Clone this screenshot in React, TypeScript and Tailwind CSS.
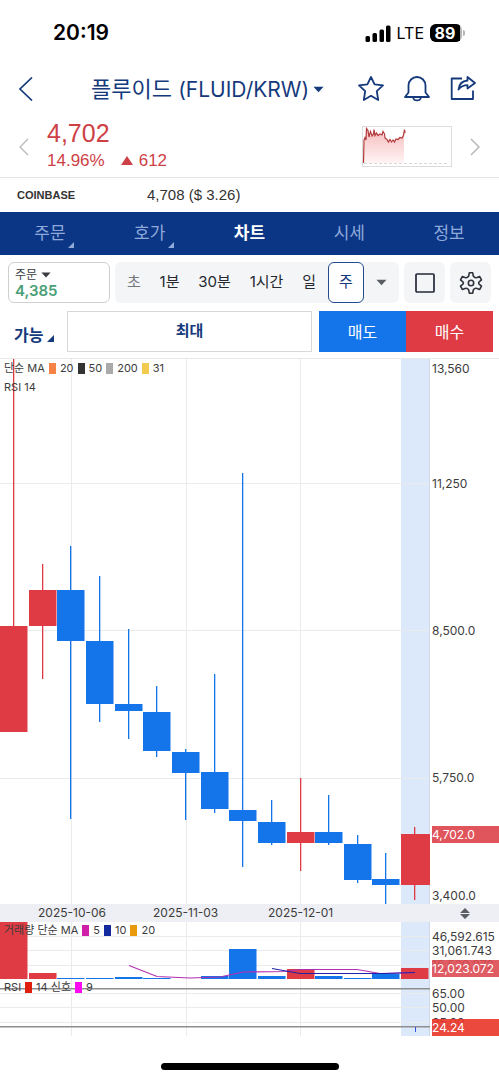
const tabs = [
  { name: "주문", more: true },
  { name: "호가", more: true },
  { name: "차트", active: true },
  { name: "시세" },
  { name: "정보" },
]

const UP = "#de3b44"
const DOWN = "#1474ea"

// top / bottom of the body, high / low of the wick, top of the volume bar
const candles = [
  { top: 267, bottom: 373, high: 0, low: 373, vol: 0, up: true },
  { top: 231, bottom: 267, high: 205, low: 320, vol: 51, up: true },
  { top: 231, bottom: 282, high: 187, low: 460, vol: 56 },
  { top: 282, bottom: 345, high: 217, low: 363, vol: 56 },
  { top: 345, bottom: 352, high: 270, low: 380, vol: 55 },
  { top: 353, bottom: 392, high: 327, low: 398, vol: 56 },
  { top: 393, bottom: 414, high: 390, low: 461, vol: 57 },
  { top: 413, bottom: 450, high: 315, low: 454, vol: 54 },
  { top: 451, bottom: 462, high: 114, low: 508, vol: 27 },
  { top: 463, bottom: 484, high: 441, low: 486, vol: 54 },
  { top: 473, bottom: 484, high: 419, low: 512, vol: 47, up: true },
  { top: 473, bottom: 484, high: 436, low: 486, vol: 54 },
  { top: 485, bottom: 521, high: 476, low: 524, vol: 56 },
  { top: 520, bottom: 526, high: 494, low: 545, vol: 52 },
  { top: 475, bottom: 526, high: 468, low: 541, vol: 46, up: true },
]

const left = (i: number) => Math.round(i * 28.65)
const gridX = [71, 186, 300]

const priceLabels = [
  { text: "13,560", y: 10 },
  { text: "11,250", y: 125 },
  { text: "8,500.0", y: 272 },
  { text: "5,750.0", y: 419 },
  { text: "3,400.0", y: 537 },
]

const subLabels = [
  { text: "46,592.615", y: 15 },
  { text: "31,061.743", y: 29 },
  { text: "15,530.872", y: 43 },
  { text: "65.00", y: 72 },
  { text: "50.00", y: 86 },
  { text: "35.00", y: 101 },
]

const Legend = ({ color, text }: { color: string; text: string }) => (
  <span className="flex items-center gap-1">
    <i className="h-[11px] w-[7px]" style={{ background: color }} />
    {text}
  </span>
)

const AxisLabel = ({ text, y }: { text: string; y: number }) => (
  <span className="absolute left-0.5 -translate-y-1/2 leading-4" style={{ top: y }}>
    {text}
  </span>
)

const Caret = ({ className }: { className: string }) => (
  <svg viewBox="0 0 12 7" className={className} fill="currentColor">
    <path d="M0.5 0.5h11L6 6.5z" />
  </svg>
)

const Corner = ({ className }: { className: string }) => (
  <svg viewBox="0 0 7 7" className={className} fill="currentColor">
    <path d="M7 0v7H0z" />
  </svg>
)

const StatusBar = () => (
  <div className="flex h-[66px] items-center justify-between pr-[34px] pl-[53px] text-black">
    <span className="text-[21px] font-semibold">20:19</span>
    <div className="flex items-center gap-1.5">
      <svg viewBox="0 0 26 17" className="h-[17px] w-[26px]">
        <rect x="0.5" y="11" width="4.5" height="6" rx="1.5" />
        <rect x="7.5" y="8" width="4.5" height="9" rx="1.5" />
        <rect x="14.5" y="4.500" width="4.5" height="12.500" rx="1.5" />
        <rect x="21" y="0.500" width="4.5" height="16.500" rx="1.5" />
      </svg>
      <span className="text-base">LTE</span>
      <div className="flex items-center gap-px">
        <div className="flex h-[18px] w-8 items-center overflow-hidden rounded-[6px] bg-[#b5b5b5]">
          <span className="flex h-full w-[30px] items-center justify-center bg-black text-base font-bold text-white">89</span>
        </div>
        <i className="h-1.5 w-0.5 rounded-r bg-[#b5b5b5]" />
      </div>
    </div>
  </div>
)

const Header = () => (
  <header className="flex h-[46px] items-center justify-between pr-[22px] pl-[18px] text-[#153a7c]">
    <button aria-label="뒤로" className="w-[73px]">
      <svg viewBox="0 0 16 24" className="h-6 w-4" fill="none" stroke="currentColor" strokeWidth="1.7">
        <path d="M14 0.500L2 12l12 11.500" />
      </svg>
    </button>
    <button className="flex flex-1 items-center gap-1">
      <h1 className="text-[22px] whitespace-nowrap">
        플루이드 <span className="text-[21px]">(FLUID/KRW)</span>
      </h1>
      <Caret className="h-[7px] w-[11px]" />
    </button>
    <div className="flex items-center gap-[18px]">
      <button aria-label="관심">
        <svg viewBox="0 0 28 28" className="size-7" fill="none" stroke="currentColor" strokeWidth="1.8" strokeLinejoin="round">
          <path d="M14 2l3.600 7.400 8.400 1-6.200 5.700 1.400 8.900L14 20.800l-7.200 4.200 1.400-8.900L2 10.400l8.400-1z" />
        </svg>
      </button>
      <button aria-label="알림">
        <svg viewBox="0 0 28 28" className="size-7" fill="none" stroke="currentColor" strokeWidth="1.8" strokeLinejoin="round">
          <path d="M5.500 17.500V10.500a8.500 8.500 0 0 1 17 0v7l3.500 4.500H2z" />
          <path d="M10 22c0.600 4.600 7.400 4.600 8 0" />
        </svg>
      </button>
      <button aria-label="공유">
        <svg viewBox="0 0 28 28" className="size-7" fill="none" stroke="currentColor" strokeWidth="1.800" strokeLinejoin="round">
          <path d="M13 3.500H2.700v20.500H24V15.500" />
          <path d="M18.500 2l7.500 6-7.500 5.500v-3.300c-4 0-6.500 1-9 4.300 0.500-5 3.500-8.500 9-9z" />
        </svg>
      </button>
    </div>
  </header>
)

const Sparkline = () => (
  <svg viewBox="0 0 90 41" className="h-[41px] w-[90px]" fill="none">
    <defs>
      <linearGradient id="fade" x1="0" y1="0" x2="0" y2="1">
        <stop offset="0" stopColor="#f6bcbd" />
        <stop offset="1" stopColor="#fff4f4" />
      </linearGradient>
    </defs>
    <path d="M1.500 37L2.500 13 4 11 5 3 7 7 9 10 12 6 17 9 21 8 24 13 29 16 34 14 37 12 40 11 42 5V37z" fill="url(#fade)" />
    <rect x="0.5" y="0.5" width="89" height="40" stroke="#dcdcdc" />
    <path d="M2 37.500h85" stroke="#d8d8d8" strokeDasharray="3 2" />
    <path
      d="M1.500 37L2 14 3 11.500 4 14 4.500 2.500 6 4.500 7 11 8.500 5.500 10 10 11.500 8 12 3.500 13 9.500 14.500 7 16 9.500 18 8 20 9 21 5.500 22.500 8 23 12 25 13.500 26.500 16 28 13.500 29.500 16 31 14 32.500 16 34 13 36 13.500 38 11.500 40 12 41.500 9.500 42.500 3.500 43 7"
      stroke="#b4393b"
      strokeWidth="1.200"
    />
  </svg>
)

const PriceRow = () => (
  <div className="flex h-[66px] items-center border-b border-[#e4e4e4] px-[19px] pt-1 font-['Liberation_Sans','Noto_Sans_CJK_KR',sans-serif] text-[#cd4146]">
    <button aria-label="이전 종목" className="w-7 text-[#b8b8b8]">
      <svg viewBox="0 0 10 18" className="h-[18px] w-2.5" fill="none" stroke="currentColor" strokeWidth="1.300">
        <path d="M9 1L1 9l8 8" />
      </svg>
    </button>
    <div className="flex-1">
      <p className="text-[25px] leading-7">4,702</p>
      <p className="flex items-center text-[17px] leading-7">
        14.96%
        <svg viewBox="0 0 12 9" className="mr-1.5 ml-4 h-[9px] w-3" fill="currentColor">
          <path d="M6 0l6 9H0z" />
        </svg>
        612
      </p>
    </div>
    <Sparkline />
    <button aria-label="다음 종목" className="flex w-7 justify-end text-[#b8b8b8]">
      <svg viewBox="0 0 10 18" className="h-[18px] w-2.5" fill="none" stroke="currentColor" strokeWidth="1.500">
        <path d="M1 1l8 8-8 8" />
      </svg>
    </button>
  </div>
)

const Toolbar = () => (
  <div className="flex gap-[5px] px-2 pt-[7px]">
    <button className="flex h-[41px] w-[102px] flex-col justify-center rounded-md border border-[#cfcfcf] pl-1.5 text-left">
      <span className="flex items-center gap-1 text-xs leading-4 text-[#3a3d42]">
        주문 <Caret className="h-1.5 w-2.5" />
      </span>
      <span className="text-[15px] leading-4 font-semibold text-[#4a9e76]">4,385</span>
    </button>
    <div className="flex h-[41px] flex-1 items-stretch justify-between rounded-md bg-[#f3f5f7] px-3 text-[15px] text-[#25282e]">
      <button className="text-[#74777c]">초</button>
      <button>1분</button>
      <button>30분</button>
      <button>1시간</button>
      <div className="flex gap-3">
        <button>일</button>
        <button className="w-9 rounded-md border border-[#234a8c] bg-white text-[#153a7c]">주</button>
        <button aria-label="주기 더보기" className="text-[#5b5e64]">
          <Caret className="h-[7px] w-[11px]" />
        </button>
      </div>
    </div>
    <button aria-label="전체 화면" className="flex size-[41px] items-center justify-center rounded-md bg-[#f3f5f7]">
      <svg viewBox="0 0 20 20" className="size-5" fill="none" stroke="#25283a" strokeWidth="1.700">
        <rect x="1" y="1" width="18" height="18" rx="1" />
      </svg>
    </button>
    <button aria-label="설정" className="flex size-[41px] items-center justify-center rounded-md bg-[#f3f5f7]">
      <svg viewBox="0 0 24 24" className="size-6" fill="none" stroke="#30333c" strokeWidth="1.600" strokeLinejoin="round">
        <path d="M10.300 1.800h3.400l0.600 3.200q1.400 2.300 3.700 1.500l2.600-1 1.900 3.300-2.400 2q-1 1.200 0 2.400l2.400 2-1.900 3.300-2.600-1q-2.300-0.800-3.700 1.500l-0.600 3.200h-3.400l-0.600-3.200q-1.400-2.300-3.700-1.500l-2.600 1-1.900-3.300 2.400-2q1-1.200 0-2.400l-2.400-2 1.900-3.300 2.600 1q2.300 0.800 3.700-1.500z" />
        <circle cx="12" cy="12" r="2.700" />
      </svg>
    </button>
  </div>
)

const OrderRow = () => (
  <div className="flex h-14 items-start border-b border-[#e8e8e8] pt-2 pr-1.5 pl-3.5">
    <button className="flex h-[41px] w-[53px] items-center gap-1 pt-1.5 text-base font-bold whitespace-nowrap text-[#153a7c]">
      가능 <Corner className="mt-2 size-[7px]" />
    </button>
    <button className="h-[41px] flex-1 border border-[#d8d8d8] text-[15px] font-bold text-[#153a7c]">최대</button>
    <div className="ml-[7px] flex h-[41px] w-[174px] text-base text-white">
      <button className="flex-1 bg-[#1474ea]">매도</button>
      <button className="flex-1 bg-[#de3b44]">매수</button>
    </div>
  </div>
)

const Chart = () => (
  <section className="text-xs text-[#3c3c3c]">
    <div className="flex">
      <div className="relative min-w-0 flex-1">
        <svg viewBox="0 0 430 545" preserveAspectRatio="none" className="h-[545px] w-full">
          <rect x="401" width="28" height="545" fill="#dbe9fa" />
          {gridX.map((x) => (
            <path key={x} d={`M${x + 0.5} 0v545`} stroke="#ebebeb" />
          ))}
          <path d="M0 124.500h430M0 271.500h430M0 419.500h430" stroke="#ebebeb" />
          <path d="M429.500 0v545" stroke="#cfd8e4" />
          {candles.map((c, i) => (
            <g key={i} fill={c.up ? UP : DOWN}>
              <rect x={left(i) + 13} y={c.high} width="1.300" height={c.low - c.high} />
              <rect x={left(i)} y={c.top} width={i === 14 ? 29 : 27.500} height={c.bottom - c.top} />
            </g>
          ))}
        </svg>
        <div className="absolute top-0 left-1 text-[11px] leading-[19px]">
          <p className="flex gap-1">
            단순 MA
            <Legend color="#f58345" text="20" />
            <Legend color="#333333" text="50" />
            <Legend color="#aaaaaa" text="200" />
            <Legend color="#f2cb4e" text="31" />
          </p>
          <p>RSI 14</p>
        </div>
      </div>
      <div className="relative w-[69px]">
        {priceLabels.map((l) => (
          <AxisLabel key={l.text} {...l} />
        ))}
        <span className="absolute top-[467px] right-0 left-0.5 bg-[#e0555c] leading-[17px] text-white">4,702.0</span>
      </div>
    </div>

    <div className="flex h-[18px] items-center bg-[#eeeff4]">
      <div className="grid h-full min-w-0 flex-1 grid-cols-[38px_115px_115px_1fr_28px] items-center">
        <span />
        <span>2025-10-06</span>
        <span>2025-11-03</span>
        <span>2025-12-01</span>
      </div>
      <div className="flex w-[69px] justify-center">
        <svg viewBox="0 0 10 11" className="h-[11px] w-2.5" fill="#5b5e64">
          <path d="M5 0l5 5H0zM0 6h10l-5 5z" />
        </svg>
      </div>
    </div>

    <div className="flex">
      <div className="relative min-w-0 flex-1">
        <svg viewBox="0 0 430 114" preserveAspectRatio="none" className="h-[114px] w-full" fill="none">
          <rect x="401" width="28" height="114" fill="#dbe9fa" />
          {gridX.map((x) => (
            <path key={x} d={`M${x + 0.5} 0v114`} stroke="#ebebeb" />
          ))}
          <path d="M0 14.500h430M0 28.500h430M0 43.500h430M0 71.500h430M0 85.500h430M0 100.500h430" stroke="#ebebeb" />
          <path d="M429.500 0v114" stroke="#cfd8e4" />
          {candles.map((c, i) => (
            <rect key={i} x={left(i)} y={c.vol} width="27.500" height={57 - c.vol} fill={c.up ? UP : DOWN} />
          ))}
          <path d="M129 43.500L157 54.500 190 56 220 55 243 50 286 49.500 300 47.500H357L380 51.500 415 50.500" stroke="#b02fb0" strokeWidth="1.200" />
          <path d="M272 46.500L300 51.500H386L415 50.500" stroke="#2222a8" strokeWidth="1.200" />
          <path d="M0 66.700h430M0 104.700h430" stroke="#8e8e8e" strokeWidth="1.400" />
          <path d="M415.500 105v5" stroke="#3a4fe0" />
        </svg>
        <p className="absolute top-0 left-1 flex gap-1 text-[11px] leading-4">
          거래량 단순 MA
          <Legend color="#d01fa8" text="5" />
          <Legend color="#1229a0" text="10" />
          <Legend color="#e8990c" text="20" />
        </p>
        <p className="absolute top-[57px] left-1 flex gap-1 text-[11px] leading-4">
          RSI
          <Legend color="#e0200f" text="14 신호" />
          <Legend color="#fb0af0" text="9" />
        </p>
      </div>
      <div className="relative w-[69px]">
        {subLabels.map((l) => (
          <AxisLabel key={l.text} {...l} />
        ))}
        <span className="absolute top-[38px] right-0 left-0.5 bg-[#de4b53]/90 leading-[17px] text-white">12,023.072</span>
        <span className="absolute top-[97px] right-0 left-0.5 bg-[#ea3529]/90 leading-[17px] text-white">24.24</span>
      </div>
    </div>
  </section>
)

const App = () => {
  return <>
    <main className="min-h-screen bg-white font-['Inter','Noto_Sans_CJK_KR',sans-serif]">
      <StatusBar />
      <Header />
      <PriceRow />
      <div className="flex h-[34px] items-center pl-[17px] font-['Liberation_Sans',sans-serif] text-[#333]">
        <span className="w-[130px] text-[11px] font-bold">COINBASE</span>
        <span className="text-[15px]">4,708 ($ 3.26)</span>
      </div>
      <nav className="grid h-[43px] grid-cols-5 bg-[#0b3685] text-[17px] text-[#8fa9da]">
        {tabs.map((t) => (
          <a key={t.name} href="#" className="relative flex items-center justify-center">
            <span className={t.active ? "font-bold text-white" : ""}>{t.name}</span>
            {t.more && <Corner className="absolute right-[26px] bottom-[7px] size-1.5" />}
          </a>
        ))}
      </nav>
      <Toolbar />
      <OrderRow />
      <Chart />
      <div className="flex justify-center pt-[27px]">
        <i className="h-[7px] w-[178px] rounded-full bg-black" />
      </div>
    </main>
  </>
}

export default App
